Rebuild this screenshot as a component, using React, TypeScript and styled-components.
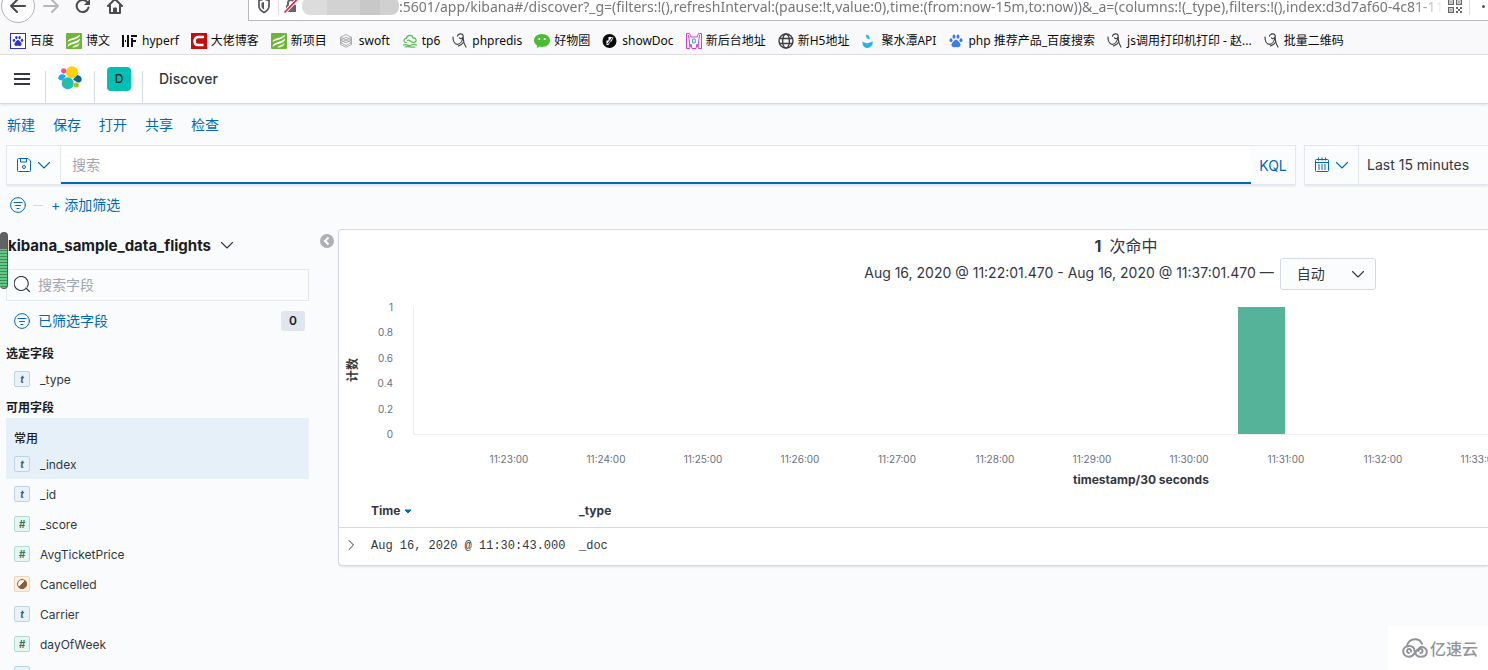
import React from "react";
import styled, { createGlobalStyle, css } from "styled-components";

const uiFont = `Inter, "Noto Sans CJK SC", sans-serif`;
const chromeFont = `"Noto Sans", "Noto Sans CJK SC", sans-serif`;
const monoFont = `"Liberation Mono", monospace`;

const c = {
  page: "#fafbfd",
  text: "#343741",
  title: "#1a1c21",
  link: "#006bb4",
  muted: "#69707d",
  hint: "#a2a6b0",
  line: "#d3dae6",
  green: "#54b399",
};

const GlobalStyle = createGlobalStyle`
  * { box-sizing: border-box; }
  body { margin: 0; background: ${c.page}; color: ${c.text}; font-family: ${uiFont}; font-size: 14px; }
  button, input, select { font: inherit; color: inherit; }
  button { padding: 0; border: 0; background: none; cursor: pointer; }
  svg { display: block; flex: none; }
`;

const Page = styled.div`
  position: relative;
  height: 100vh;
  overflow: hidden;
  display: flex;
  flex-direction: column;
`;

/* Browser chrome */
const Toolbar = styled.div`
  flex: none;
  height: 24px;
  overflow: hidden;
  display: flex;
  align-items: flex-end;
  background: #f9f9fb;
`;
const ToolbarRow = styled.div`
  flex: 1;
  min-width: 0;
  height: 36px;
  display: flex;
  align-items: center;
`;
const NavButtons = styled.div`
  flex: none;
  width: 248px;
  display: flex;
  align-items: center;
`;
const NavButton = styled.button<{ $round?: boolean }>`
  width: 32px;
  height: 34px;
  display: flex;
  align-items: center;
  justify-content: center;
  ${(p) =>
    p.$round &&
    css`
      width: 34px;
      margin-left: 1px;
      border: 1px solid #b4b4b8;
      border-radius: 50%;
      background: #fdfdfd;
    `}
`;
const UrlBox = styled.div`
  flex: 1;
  min-width: 0;
  height: 30px;
  display: flex;
  align-items: center;
  border: 1px solid #b9b9bd;
  border-right: 0;
  background: #fff;
`;
const UrlIcon = styled.span`
  flex: none;
  width: 29px;
  height: 18px;
  display: flex;
  justify-content: center;
  align-items: center;
  & + & {
    width: 24px;
    border-left: 1px solid #dedee2;
  }
`;
const HostMask = styled.span`
  flex: none;
  width: 97px;
  height: 18px;
  border-radius: 8px;
  background: linear-gradient(90deg, #dcdcdc 0 26%, #d2d2d2 26% 60%, #c8c8c8 60% 80%, #d0d0d0 80%);
`;
const UrlInput = styled.input`
  flex: 1;
  min-width: 0;
  height: 28px;
  padding: 0;
  border: 0;
  outline: 0;
  background: transparent;
  font-family: ${chromeFont};
  font-size: 14px;
  color: #77777b;
  mask-image: linear-gradient(90deg, #000 calc(100% - 30px), transparent);
`;
const UrlTail = styled.span`
  flex: none;
  width: 44px;
  height: 18px;
  display: flex;
  align-items: center;
  gap: 7px;
  padding-left: 4px;
`;
const TailLine = styled.i`
  width: 1px;
  height: 18px;
  background: #dedee2;
`;
const TailDot = styled.i`
  width: 3px;
  height: 3px;
  margin-left: 5px;
  border-radius: 50%;
  background: #55555a;
`;
const Bookmarks = styled.nav`
  flex: none;
  height: 31px;
  padding: 3px 10px 0;
  display: flex;
  align-items: center;
  gap: 12px;
  border-bottom: 1px solid #dcdce0;
  background: #f9f9fb;
  overflow: hidden;
`;
const Bookmark = styled.a`
  flex: none;
  display: flex;
  align-items: center;
  gap: 4px;
  font-family: ${chromeFont};
  font-size: 12px;
  line-height: 16px;
  color: #0c0c0d;
  text-decoration: none;
  white-space: nowrap;
`;

/* Kibana header */
const Header = styled.header`
  position: relative;
  flex: none;
  height: 49px;
  display: flex;
  background: #fff;
  border-bottom: 1px solid ${c.line};
  box-shadow: 0 2px 2px -1px rgba(152, 162, 179, 0.3);
`;
const HeaderCell = styled.button<{ $w: number }>`
  width: ${(p) => p.$w}px;
  height: 48px;
  display: flex;
  align-items: center;
  justify-content: center;
  background: linear-gradient(${c.line}, ${c.line}) right bottom / 1px 32px no-repeat;
`;
const SpaceBadge = styled.span`
  width: 24px;
  height: 24px;
  border-radius: 4px;
  background: #00bfb3;
  color: #1a1c21;
  font-size: 12px;
  font-weight: 500;
  line-height: 24px;
  text-align: center;
`;
const Crumb = styled.span`
  padding-left: 16px;
  font-size: 14px;
  font-weight: 500;
  line-height: 48px;
`;

/* Query area */
const TopMenu = styled.nav`
  flex: none;
  padding: 11px 7px 10px;
  display: flex;
  gap: 18px;
`;
const LinkButton = styled.button`
  color: ${c.link};
  font-size: 14px;
  line-height: 20px;
  white-space: nowrap;
`;
const QueryRow = styled.div`
  flex: none;
  padding-left: 6px;
  display: flex;
  gap: 8px;
`;
const Control = styled.div<{ $grow?: boolean }>`
  height: 40px;
  display: flex;
  border: 1px solid #e3e7ef;
  background: #fbfcfd;
  box-shadow: 0 2px 2px -1px rgba(152, 162, 179, 0.3);
  ${(p) => (p.$grow ? "flex: 1; min-width: 0;" : "flex: none; width: 184px; border-right: 0;")}
`;
const Addon = styled.button<{ $w: number }>`
  flex: none;
  width: ${(p) => p.$w}px;
  display: flex;
  align-items: center;
  justify-content: center;
  gap: 6px;
  color: ${c.link};
`;
const QueryInput = styled.input`
  flex: 1;
  min-width: 0;
  padding: 0 11px 2px;
  border: 0;
  border-left: 1px solid #e3e7ef;
  outline: 0;
  background: linear-gradient(${c.link}, ${c.link}) left bottom / 100% 2px no-repeat #fff;
  &::placeholder { color: ${c.hint}; }
`;
const TimeButton = styled.button`
  flex: 1;
  padding: 0 0 2px 8px;
  border-left: 1px solid #e3e7ef;
  text-align: left;
  white-space: nowrap;
`;
const FilterRow = styled.div`
  flex: none;
  height: 44px;
  padding: 0 10px 4px;
  display: flex;
  align-items: center;
`;
const Dash = styled.i`
  width: 10px;
  height: 1px;
  margin: 0 8px 0 7px;
  background: ${c.line};
`;

/* Body */
const Body = styled.main`
  flex: 1;
  min-height: 0;
  display: flex;
  align-items: flex-start;
`;
const Sidebar = styled.aside`
  flex: none;
  width: 309px;
  padding-left: 6px;
`;
const IndexButton = styled.button`
  height: 32px;
  padding-left: 2px;
  display: flex;
  align-items: center;
  gap: 9px;
  color: ${c.title};
  font-size: 15px;
  font-weight: 700;
`;
const FieldSearch = styled.label`
  height: 32px;
  margin-top: 8px;
  padding: 0 7px 2px;
  display: flex;
  align-items: center;
  gap: 8px;
  border: 1px solid #e3e7ef;
  background: #fbfcfd;
  input {
    flex: 1;
    min-width: 0;
    padding: 0;
    border: 0;
    outline: 0;
    background: none;
  }
  input::placeholder { color: ${c.hint}; }
`;
const FilteredRow = styled.div`
  height: 40px;
  padding: 0 4px 0 8px;
  display: flex;
  align-items: center;
  justify-content: space-between;
  button {
    display: flex;
    align-items: center;
    gap: 8px;
  }
`;
const Count = styled.span`
  width: 24px;
  height: 20px;
  border-radius: 3px;
  background: #e0e5ee;
  color: ${c.title};
  font-size: 12px;
  font-weight: 600;
  line-height: 20px;
  text-align: center;
`;
const GroupTitle = styled.h3`
  margin: 0;
  padding: 4px 0 1px;
  color: ${c.title};
  font-size: 12px;
  font-weight: 700;
  line-height: 18px;
  ul + & { padding-top: 5px; }
`;
const FieldList = styled.ul`
  margin: 0;
  padding: 0;
  list-style: none;
`;
const Popular = styled.div`
  padding-top: 11px;
  background: #e6f0f8;
  h4 {
    margin: 0;
    padding-left: 8px;
    color: ${c.title};
    font-size: 12px;
    font-weight: 500;
    line-height: 20px;
  }
`;
const Field = styled.li`
  height: 30px;
  padding-left: 8px;
  display: flex;
  align-items: center;
  gap: 10px;
  font-size: 12px;
`;
type Kind = "t" | "#" | "b";
const tokenColors: Record<Kind, [string, string, string]> = {
  t: ["#e9f2f8", "#bcd3e4", "#3f6078"],
  "#": ["#e6f5f0", "#b5dccf", "#387765"],
  b: ["#fbf0e3", "#f0d5b8", "#8f5f31"],
};
const Token = styled.span<{ $kind: Kind }>`
  width: 16px;
  height: 16px;
  display: flex;
  align-items: center;
  justify-content: center;
  border: 1px solid ${(p) => tokenColors[p.$kind][1]};
  border-radius: 2px;
  background: ${(p) => tokenColors[p.$kind][0]};
  color: ${(p) => tokenColors[p.$kind][2]};
  font-size: 10px;
  font-weight: 700;
  font-style: italic;
  line-height: 14px;
`;
const Gutter = styled.div`
  flex: none;
  width: 29px;
  padding: 5px 0 0 11px;
`;
const Panel = styled.section`
  flex: 1;
  min-width: 0;
  overflow: hidden;
  border: 1px solid ${c.line};
  border-right: 0;
  border-radius: 4px 0 0 4px;
  background: #fff;
  box-shadow: 0 2px 2px -1px rgba(152, 162, 179, 0.3);
`;
const Wide = styled.div`
  min-width: 1562px;
`;
const Hits = styled.h2`
  margin: 0;
  padding: 4px 0 0 12px;
  display: flex;
  justify-content: center;
  gap: 8px;
  font-size: 16px;
  font-weight: 400;
  line-height: 24px;
`;
const RangeRow = styled.div`
  display: flex;
  justify-content: center;
  gap: 6px;
  line-height: 30px;
  white-space: nowrap;
`;
const SelectWrap = styled.label`
  width: 96px;
  height: 32px;
  display: grid;
  align-items: center;
  border: 1px solid ${c.line};
  border-radius: 3px;
  background: #fbfcfd;
  & > * { grid-area: 1 / 1; }
  svg { justify-self: end; margin-right: 10px; pointer-events: none; }
  select {
    width: 100%;
    height: 30px;
    padding: 0 16px;
    border: 0;
    outline: 0;
    appearance: none;
    background: none;
  }
`;
const Chart = styled.svg`
  font-family: ${uiFont};
  font-size: 10px;
  fill: ${c.muted};
  .label { font-size: 12px; font-weight: 700; fill: ${c.text}; }
`;
const DocTable = styled.table`
  width: 100%;
  table-layout: fixed;
  border-collapse: collapse;
  font-size: 12px;
  text-align: left;
  th { height: 33px; padding: 0; font-weight: 700; border-bottom: 1px solid ${c.line}; }
  td { height: 38px; padding: 0; font-family: ${monoFont}; white-space: nowrap; }
`;
const Col = styled.col<{ $w?: number }>`
  ${(p) => p.$w && `width: ${p.$w}px;`}
`;
const SortHead = styled.button`
  display: flex;
  align-items: center;
  gap: 4px;
  font-weight: 700;
`;
const Expand = styled.button`
  display: block;
  padding: 0 0 2px 6px;
`;

/* Overlays */
const EdgeMeter = styled.div`
  position: absolute;
  left: 0;
  top: 232px;
  width: 8px;
  height: 57px;
  border: 1px solid #55585a;
  border-left: 0;
  border-radius: 4px;
  background:
    linear-gradient(#606366, #606366) top / 100% 16px no-repeat,
    repeating-linear-gradient(#5fca81 0 2px, #46895a 2px 3px);
`;
const Watermark = styled.div`
  position: absolute;
  right: 0;
  bottom: 0;
  width: 100px;
  height: 44px;
  padding-left: 14px;
  display: flex;
  align-items: center;
  gap: 2px;
  background: #fff;
  color: #909399;
  font-size: 16px;
  font-weight: 500;
`;

const Chevron = ({ color = c.text }: { color?: string }) => (
  <svg width="14" height="14" viewBox="0 0 14 14" fill="none" stroke={color} strokeWidth="1.1" strokeLinecap="round" strokeLinejoin="round">
    <path d="M1.500 4.500 7 10l5.500-5.500" />
  </svg>
);
const FilterIcon = () => (
  <svg width="16" height="16" viewBox="0 0 16 16" fill="none" stroke={c.link} strokeLinecap="round">
    <circle cx="8" cy="8" r="7.400" />
    <path d="M4 5.500h8M5.500 8.500h5M7 11.500h2" />
  </svg>
);

const Paw = ({ color }: { color: string }) => (
  <g fill={color}>
    <ellipse cx="3" cy="7.200" rx="1.500" ry="2" />
    <ellipse cx="6" cy="3.700" rx="1.500" ry="2.100" />
    <ellipse cx="10" cy="3.700" rx="1.500" ry="2.100" />
    <ellipse cx="13" cy="7.200" rx="1.500" ry="2" />
    <path d="M8 6.800c1.500 0 2.200 1.600 3.400 2.700 1.400 1.200 1.700 4-.6 4.600-1.200.3-1.800-.2-2.800-.2s-1.600.5-2.800.2c-2.300-.6-2-3.400-.6-4.600C5.800 8.400 6.500 6.800 8 6.800Z" />
  </g>
);
const Leaf = () => (
  <>
    <rect width="16" height="16" rx="1" fill="#6fb536" />
    <path d="M1.500 9C2.500 4.500 9 6 14 1.500 14 6.500 6.500 6 1.500 9ZM1.500 14c.5-5.500 7.500-4 12.500-8.500C14 11.500 6.500 9.500 1.500 14Z" fill="#fff" />
    <path d="M6.500 14.500c1-2.500 4.500-2 7-4.500 0 3-3 4.500-7 4.500Z" fill="#e5f3d6" />
  </>
);
const Figure = () => (
  <g fill="none" stroke="#3f3f42" strokeWidth="1.200" strokeLinecap="round" strokeLinejoin="round">
    <path d="M5.500 3.200C6 .6 10.500 0 11.200 2.600c.6 2.500-2.500 4-3.700 2.300" />
    <path d="M1 4c0 3.800 1.600 7.300 4.300 7.300C8 11.300 10.300 8 11 4.500c.3 4 1.200 7 3 9.500" />
    <path d="M6.500 12.800c2-.3 3.700-1.600 4.800-3.300" />
  </g>
);
const Globe = () => (
  <g fill="none" stroke="#3f3f44" strokeWidth="1.400">
    <circle cx="8" cy="8" r="7" />
    <ellipse cx="8" cy="8" rx="3.400" ry="7" />
    <path d="M1.500 5.500h13M1.500 10.500h13" />
  </g>
);

const bookmarks: { name: string; art: React.ReactNode }[] = [
  {
    name: "百度",
    art: (
      <>
        <rect x=".5" y=".5" width="15" height="15" fill="#fff" stroke="#2a32c8" />
        <g transform="translate(1.600 1.600) scale(.8)"><Paw color="#2a32d8" /></g>
      </>
    ),
  },
  { name: "博文", art: <Leaf /> },
  {
    name: "hyperf",
    art: <path d="M0 2h2v12H0zM5 2h2v12H5zM3 7h1v2H3zM9 2h6v2H9zM11 7h3v2h-3zM9 5h2v9H9z" fill="#111" />,
  },
  {
    name: "大佬博客",
    art: (
      <>
        <rect width="16" height="16" fill="#c40d0d" />
        <path d="M13 4H7.500Q4 4 3.500 8q0 4 3.500 4h5.500" fill="none" stroke="#fff" strokeWidth="2.600" />
      </>
    ),
  },
  { name: "新项目", art: <Leaf /> },
  {
    name: "swoft",
    art: (
      <g fill="none" stroke="#98989c" strokeWidth=".8">
        <path d="m7 1.500 5.500 2.800L7 7 1.500 4.300ZM1.500 7 7 9.700 12.500 7M1.500 9.700 7 12.500l5.500-2.800M1.500 4.300v7.200L7 14.300l5.500-2.800V4.300M1.500 7 7 4.300 12.500 7M1.500 9.700 7 7l5.500 2.700" />
      </g>
    ),
  },
  {
    name: "tp6",
    art: (
      <g fill="none" stroke="#58b957" strokeWidth="1.200" strokeLinecap="round">
        <path d="M4.500 9.500C1 9.500 1.500 5 4.500 5.500 5 1.500 10.500 1.500 11 5c4-.5 4 4.500.5 4.500-3 0-4-3.500-6-2" />
        <path d="M1.500 12c3-1.500 4.500 1.500 7 .3s4-1.300 6-.3M3 14c3-1 6 .5 10 0" />
      </g>
    ),
  },
  { name: "phpredis", art: <Figure /> },
  {
    name: "好物圈",
    art: (
      <>
        <path d="M8 1c4.500 0 8 2.800 8 6.500S12.500 14 8 14c-1 0-1.900-.1-2.700-.4L2.800 15l.3-2.500C1.200 11.300 0 9.500 0 7.500 0 3.800 3.500 1 8 1Z" fill="#4cbb35" />
        <g fill="#fff"><circle cx="5.300" cy="6" r="1.100" /><circle cx="10.700" cy="6" r="1.100" /></g>
      </>
    ),
  },
  {
    name: "showDoc",
    art: (
      <>
        <circle cx="7.500" cy="8" r="7" fill="#0b0b0b" />
        <path d="M6.500 4h5L9.500 8.500h-3ZM4.500 7.500h4.200L6.500 12h-2Z" fill="#fff" />
        <path d="m5.500 11 4.800-6.500" stroke="#0b0b0b" />
      </>
    ),
  },
  {
    name: "新后台地址",
    art: (
      <>
        <path d="M.5 15.500V.5h3L5 4h6l1.500-3.500h3v15h-3L11 11l-1 4.500H6L5 11l-1.500 4.500Z" fill="#fff" stroke="#d13ad6" />
        <path d="M2.500 2 4 14M13.500 2 12 14" stroke="#d13ad6" />
        <path d="M6.500 6H9q1.500 1.500 0 4H6.500Z" fill="#cfe9f8" stroke="#4aa6d8" />
      </>
    ),
  },
  { name: "新H5地址", art: <Globe /> },
  {
    name: "聚水潭API",
    art: (
      <g fill="#25b5e6">
        <path d="M1.500 8.500c3.500 2.500 7 2 10-.5 1 4-2 7-5 7s-5.500-2.500-5-6.500Z" />
        <path d="M5 1.500c2.500.3 4 2 3.500 5Q5 6 5 1.500Z" />
      </g>
    ),
  },
  { name: "php 推荐产品_百度搜索", art: <Paw color="#3a7be8" /> },
  { name: "js调用打印机打印 - 赵...", art: <Figure /> },
  { name: "批量二维码", art: <Figure /> },
];

const fields: [Kind, string][] = [
  ["t", "_id"],
  ["#", "_score"],
  ["#", "AvgTicketPrice"],
  ["b", "Cancelled"],
  ["t", "Carrier"],
  ["#", "dayOfWeek"],
  ["t", "Dest"],
];

const FieldRow = ({ kind, name }: { kind: Kind; name: string }) => (
  <Field>
    <Token $kind={kind}>
      {kind === "b" ? (
        <svg width="12" height="12" viewBox="0 0 12 12">
          <circle cx="6" cy="6" r="4.500" fill="#fff8ee" stroke="#8f5f31" />
          <path d="M9.200 2.800A4.500 4.500 0 0 1 2.800 9.200Z" fill="#8f5f31" stroke="#8f5f31" />
        </svg>
      ) : (
        kind
      )}
    </Token>
    {name}
  </Field>
);

const yTicks = ["1", "0.8", "0.6", "0.4", "0.2", "0"];
const xTicks = Array.from({ length: 14 }, (_, i) => `11:${23 + i}:00`);

const Histogram = () => (
  <Chart width="1562" height="204" role="img" aria-label="计数 / timestamp">
    {yTicks.map((t, i) => (
      <text key={t} x="54" y={Math.round(21 + i * 25.4)} textAnchor="end">{t}</text>
    ))}
    <path d="M74.500 17v127.500H1530" fill="none" stroke="#eceef2" />
    <rect x="899" y="17" width="47" height="127" fill={c.green} />
    {xTicks.map((t, i) => (
      <text key={t} x={Math.round(170 + i * 97.1)} y="173" textAnchor="middle">{t}</text>
    ))}
    <text className="label" x="802" y="194" textAnchor="middle">timestamp/30 seconds</text>
    <text className="label" transform="translate(18 80) rotate(-90)" textAnchor="middle">计数</text>
  </Chart>
);

export default function App() {
  return (
    <Page>
      <GlobalStyle />
      <Toolbar>
        <ToolbarRow>
          <NavButtons>
            <NavButton $round aria-label="Back">
              <svg width="18" height="16" viewBox="0 0 18 16" fill="none" stroke="#4a4a4f" strokeWidth="2" strokeLinecap="round" strokeLinejoin="round"><path d="M16 8H2.500M8 2 2 8l6 6" /></svg>
            </NavButton>
            <NavButton aria-label="Forward">
              <svg width="18" height="16" viewBox="0 0 18 16" fill="none" stroke="#b7b7ba" strokeWidth="2" strokeLinecap="round" strokeLinejoin="round"><path d="M2 8h13.500M10 2l6 6-6 6" /></svg>
            </NavButton>
            <NavButton aria-label="Reload">
              <svg width="16" height="16" viewBox="0 0 16 16" fill="none" stroke="#4a4a4f" strokeWidth="2" strokeLinecap="round"><path d="M13.500 9.500A6 6 0 1 1 12.500 4.500" /><path d="M15 1v6H9Z" fill="#4a4a4f" stroke="none" /></svg>
            </NavButton>
            <NavButton aria-label="Home">
              <svg width="18" height="16" viewBox="0 0 18 16" fill="none" stroke="#4a4a4f" strokeWidth="2" strokeLinecap="round" strokeLinejoin="round"><path d="m2 8 7-7 7 7M4 7.500V15h10V7.500M8 15v-4.500h2V15" /></svg>
            </NavButton>
          </NavButtons>
          <UrlBox>
            <UrlIcon>
              <svg width="14" height="16" viewBox="0 0 14 16"><path d="M7 1 2 2.500V8c0 3 2 5 5 6.500C10 13 12 11 12 8V2.500Z" fill="none" stroke="#55555a" strokeWidth="1.700" /><path d="M7 4v7.500C5.300 10.500 4.500 9.500 4.500 8V4.700Z" fill="#55555a" /></svg>
            </UrlIcon>
            <UrlIcon>
              <svg width="16" height="16" viewBox="0 0 16 16"><path d="M3 7h10v7H3z" fill="#66666b" /><path d="M5 7V5a3 3 0 0 1 6 0v2" fill="none" stroke="#66666b" strokeWidth="2" /><path d="M1.500 14.500 14.500 1" stroke="#fff" strokeWidth="3.500" /><path d="M1.500 14.500 14.500 1" stroke="#e22850" strokeWidth="1.800" /></svg>
            </UrlIcon>
            <HostMask />
            <UrlInput
              aria-label="Address"
              readOnly
              value=":5601/app/kibana#/discover?_g=(filters:!(),refreshInterval:(pause:!t,value:0),time:(from:now-15m,to:now))&_a=(columns:!(_type),filters:!(),index:d3d7af60-4c81-11e8"
            />
            <UrlTail>
              <svg width="14" height="14" viewBox="0 0 14 14" fill="#66666b">
                <path d="M0 0h6v6H0zM1.300 1.300v3.400h3.400V1.300zM8 0h6v6H8zM9.300 1.300v3.400h3.400V1.300zM0 8h6v6H0zM1.300 9.300v3.400h3.400V9.300z" fillRule="evenodd" />
                <path d="M2.300 2.300h1.400v1.400H2.300zM10.300 2.300h1.400v1.400h-1.400zM2.300 10.300h1.400v1.400H2.300zM8 8h2v2H8zM12 8h2v2h-2zM10 10h2v2h-2zM8 12h2v2H8zM12 12h2v2h-2z" />
              </svg>
              <TailLine />
              <TailDot />
            </UrlTail>
          </UrlBox>
        </ToolbarRow>
      </Toolbar>
      <Bookmarks>
        {bookmarks.map((b) => (
          <Bookmark href="#" key={b.name}>
            <svg width="16" height="16" viewBox="0 0 16 16">{b.art}</svg>
            {b.name}
          </Bookmark>
        ))}
      </Bookmarks>

      <Header>
        <HeaderCell $w={46} aria-label="Menu">
          <svg width="18" height="12" viewBox="0 0 18 12" fill={c.text}><path d="M0 0h16v2H0zM0 5h16v2H0zM0 10h16v2H0z" /></svg>
        </HeaderCell>
        <HeaderCell $w={49} aria-label="Elastic">
          <svg width="25" height="26" viewBox="0 0 25 26">
            <circle cx="14" cy="6.300" r="6.100" fill="#fed10a" />
            <circle cx="5.700" cy="4.800" r="2.600" fill="#f04e98" />
            <path d="M.3 12.500C0 9.500 2.500 7.600 5.500 8.300L8 9.800l-3.500 4.600Q1.300 14.800.3 12.500Z" fill="#1ba9f5" />
            <circle cx="9.700" cy="17.300" r="6" fill="#24bbb1" />
            <path d="M15 13.500 19.500 9c3 .4 4.500 2.700 4 5.200-.6 2.300-2.600 2.600-4.200 2Z" fill="#07659f" />
            <circle cx="18.300" cy="19" r="2.500" fill="#93c90e" />
          </svg>
        </HeaderCell>
        <HeaderCell $w={48} aria-label="Space">
          <SpaceBadge>D</SpaceBadge>
        </HeaderCell>
        <Crumb>Discover</Crumb>
      </Header>

      <TopMenu>
        {["新建", "保存", "打开", "共享", "检查"].map((t) => (
          <LinkButton key={t}>{t}</LinkButton>
        ))}
      </TopMenu>
      <QueryRow>
        <Control $grow>
          <Addon $w={53} aria-label="Saved queries">
            <svg width="14" height="14" viewBox="0 0 14 14" fill="none" stroke={c.link}>
              <path d="M.5 1.500a1 1 0 0 1 1-1h9.500l2.500 2.500v9.500a1 1 0 0 1-1 1h-11a1 1 0 0 1-1-1Z" />
              <path d="M3.500.5V4h6V.5" />
              <circle cx="7" cy="9" r="1.500" />
            </svg>
            <Chevron color={c.link} />
          </Addon>
          <QueryInput aria-label="搜索" placeholder="搜索" />
          <Addon $w={44}>KQL</Addon>
        </Control>
        <Control>
          <Addon $w={53} aria-label="Quick dates">
            <svg width="14" height="16" viewBox="0 0 14 16" fill="none" stroke={c.link}>
              <rect x=".5" y="2.500" width="13" height="12" rx="1" />
              <path d="M.5 5.500h13M3.500.5v3M7 .5v3M10.500.5v3" />
              <path d="M3 8h2M6 8h2M9 8h2M3 10h2M6 10h2M9 10h2M3 12h2M6 12h2M9 12h2" />
            </svg>
            <Chevron color={c.link} />
          </Addon>
          <TimeButton>Last 15 minutes</TimeButton>
        </Control>
      </QueryRow>
      <FilterRow>
        <FilterIcon />
        <Dash />
        <LinkButton>+ 添加筛选</LinkButton>
      </FilterRow>

      <Body>
        <Sidebar>
          <IndexButton>
            kibana_sample_data_flights
            <Chevron />
          </IndexButton>
          <FieldSearch>
            <svg width="16" height="16" viewBox="0 0 16 16" fill="none" stroke={c.text} strokeWidth="1.100" strokeLinecap="round">
              <path d="M11.800 12.700A7 7 0 1 1 13.200 11M12 12l3.500 3.500" />
            </svg>
            <input aria-label="搜索字段" placeholder="搜索字段" />
          </FieldSearch>
          <FilteredRow>
            <LinkButton>
              <FilterIcon />
              已筛选字段
            </LinkButton>
            <Count>0</Count>
          </FilteredRow>
          <GroupTitle>选定字段</GroupTitle>
          <FieldList>
            <FieldRow kind="t" name="_type" />
          </FieldList>
          <GroupTitle>可用字段</GroupTitle>
          <Popular>
            <h4>常用</h4>
            <FieldList>
              <FieldRow kind="t" name="_index" />
            </FieldList>
          </Popular>
          <FieldList>
            {fields.map(([kind, name]) => (
              <FieldRow key={name} kind={kind} name={name} />
            ))}
          </FieldList>
        </Sidebar>
        <Gutter>
          <button aria-label="Collapse">
            <svg width="14" height="14" viewBox="0 0 14 14">
              <circle cx="7" cy="7" r="7" fill="#adb0b5" />
              <path d="M8.500 3.500 5 7l3.500 3.500" fill="none" stroke="#fff" strokeWidth="2" />
            </svg>
          </button>
        </Gutter>
        <Panel>
          <Wide>
            <Hits>
              <strong>1</strong>次命中
            </Hits>
            <RangeRow>
              <span>Aug 16, 2020 @ 11:22:01.470 - Aug 16, 2020 @ 11:37:01.470 —</span>
              <SelectWrap>
                <select aria-label="Interval">
                  <option>自动</option>
                </select>
                <Chevron />
              </SelectWrap>
            </RangeRow>
            <Histogram />
            <DocTable>
              <colgroup>
                <Col $w={32} />
                <Col $w={208} />
                <Col />
              </colgroup>
              <thead>
                <tr>
                  <th />
                  <th>
                    <SortHead>
                      Time
                      <svg width="8" height="8" viewBox="0 0 8 8"><path d="M1 4h6L4 7Z" fill={c.link} stroke={c.link} strokeLinejoin="round" /></svg>
                    </SortHead>
                  </th>
                  <th>_type</th>
                </tr>
              </thead>
              <tbody>
                <tr>
                  <td>
                    <Expand aria-label="Expand">
                      <svg width="12" height="12" viewBox="0 0 12 12" fill="none" stroke={c.text} strokeLinecap="round"><path d="m4 1.500 4.500 4.500L4 10.500" /></svg>
                    </Expand>
                  </td>
                  <td>Aug 16, 2020 @ 11:30:43.000</td>
                  <td>_doc</td>
                </tr>
              </tbody>
            </DocTable>
          </Wide>
        </Panel>
      </Body>

      <EdgeMeter />
      <Watermark>
        <svg width="26" height="20" viewBox="0 0 26 20" fill="none" stroke="#909399" strokeWidth="2" strokeLinecap="round">
          <path d="M5 8.500C5 4 9 1.200 13 1.200c3.500 0 6 2 7 4.600" />
          <path d="M12.500 13c0-3-2-5-5.300-5-3.500 0-6 2.200-6 5.300s2.500 5.400 6 5.400c5.500 0 5.300-5.700 11-9.400 3-1 6.600.8 6.600 4.400s-2.800 5-6 5c-3.500 0-5-2-5.500-4" />
          <path d="M9 13.500a2 2 0 1 0-2 1.500M16.500 13a2 2 0 1 1 2 2" />
        </svg>
        亿速云
      </Watermark>
    </Page>
  );
}
